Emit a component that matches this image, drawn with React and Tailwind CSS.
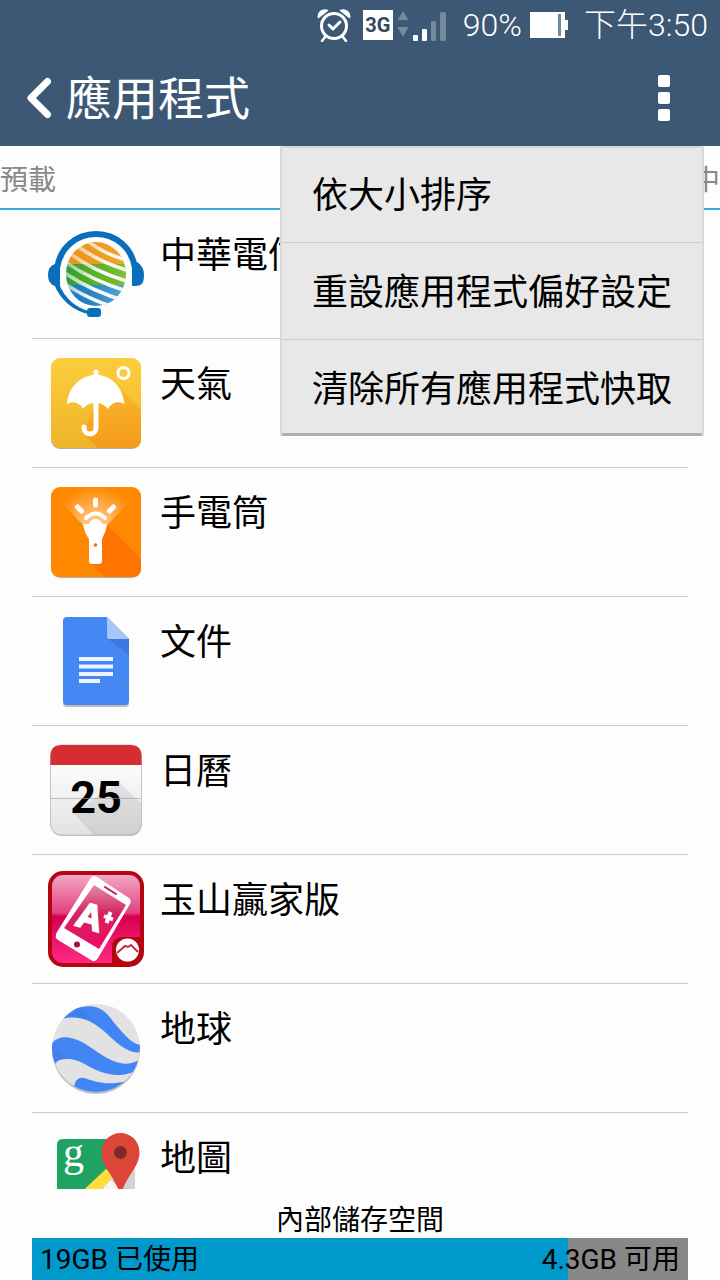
const AlarmIcon = () => (
  <svg viewBox="0 0 34 34" className="w-[34px] h-[34px]" fill="none" stroke="white" strokeLinecap="round">
    <circle cx="17" cy="18" r="12.5" strokeWidth="3" />
    <path d="M12 17l4 4 7-7" strokeWidth="3" strokeLinejoin="round" />
    <path d="M8 29l-3 4M26 29l3 4" strokeWidth="2.5" />
    <path d="M1.5 9.5C0.5 4.5 5.5 0.5 10.5 2.5Z" fill="white" strokeWidth="1.5" strokeLinejoin="round" />
    <path d="M32.5 9.5C33.5 4.5 28.5 0.5 23.5 2.5Z" fill="white" strokeWidth="1.5" strokeLinejoin="round" />
  </svg>
);

const SignalIcon = () => (
  <svg viewBox="0 0 50 34" className="w-[50px] h-[34px]">
    <g fill="#75899d">
      <path d="M6 3l5.5 9h-11zM6 29l5.5-10h-11z" />
      <rect x="34" y="13" width="5" height="20" rx="1.5" />
      <rect x="43" y="4" width="6" height="29" rx="1.5" />
    </g>
    <rect x="16" y="27" width="5" height="6" rx="1" fill="white" />
    <rect x="25" y="21" width="5" height="12" rx="1" fill="white" />
  </svg>
);

const BatteryIcon = () => (
  <svg viewBox="0 0 38 26" className="w-[38px] h-[26px]">
    <path d="M0 0h35v8h3v10h-3v8H0z" fill="white" />
    <rect x="28" y="2" width="3" height="22" fill="#75899d" />
  </svg>
);

const ServiceIcon = () => (
  <svg viewBox="0 0 96 96" className="w-24 h-24 shrink-0">
    <defs>
      <clipPath id="ball">
        <ellipse cx="48" cy="48" rx="30" ry="32" />
      </clipPath>
      <linearGradient id="orangeBand" x1="0" x2="1">
        <stop offset="0" stopColor="#e8921c" />
        <stop offset="1" stopColor="#f2a32e" />
      </linearGradient>
      <linearGradient id="greenBand" x1="0" x2="1">
        <stop offset="0" stopColor="#2f9e2f" />
        <stop offset="0.5" stopColor="#5cb02c" />
        <stop offset="1" stopColor="#7fc02f" />
      </linearGradient>
      <linearGradient id="blueBand" x1="0" x2="1">
        <stop offset="0.3" stopColor="#1f7fbf" />
        <stop offset="1" stopColor="#5ba5d3" />
      </linearGradient>
      <linearGradient id="stripe" gradientUnits="userSpaceOnUse" x1="18" x2="78" y1="30" y2="60">
        <stop offset="0" stopColor="white" stopOpacity="0.4" />
        <stop offset="0.6" stopColor="white" stopOpacity="0.95" />
      </linearGradient>
    </defs>
    <g clipPath="url(#ball)">
      <rect x="18" y="16" width="60" height="22" fill="url(#orangeBand)" />
      <rect x="18" y="38" width="60" height="21" fill="url(#greenBand)" />
      <rect x="18" y="59" width="60" height="21" fill="url(#blueBand)" />
      <g fill="none" stroke="url(#stripe)" strokeWidth="3.6">
        <path d="M38 14Q56 28 78 34" />
        <path d="M28 19Q50 36 82 45" />
        <path d="M20 26Q46 46 82 56" />
        <path d="M16 35Q44 55 82 66" />
        <path d="M14 45Q42 65 78 75" />
        <path d="M14 56Q40 74 72 83" />
      </g>
    </g>
    <path d="M9 42C12 22 28 8 48 8S84 22 87 42" fill="none" stroke="#0a6fba" strokeWidth="6" />
    <path d="M12 60H7Q0 58 0 49T7 38H12ZM84 36H89Q96 40 96 49T92 59Q91 60 84 60Z" fill="#0a6fba" />
    <path d="M6 58C12 74 26 85 40 88V85C28 81 17 73 11 58Z" fill="#0a6fba" />
    <rect x="39" y="82" width="14" height="9" rx="3" fill="#0a6fba" />
  </svg>
);

const WeatherIcon = () => (
  <svg viewBox="0 0 96 96" className="w-24 h-24 shrink-0">
    <defs>
      <linearGradient id="sun" x1="0" x2="0" y1="0" y2="1">
        <stop offset="0" stopColor="#fdce3c" />
        <stop offset="1" stopColor="#efb32b" />
      </linearGradient>
      <linearGradient id="sunShade" x1="0" x2="0" y1="0" y2="1">
        <stop offset="0" stopColor="#f9b529" />
        <stop offset="1" stopColor="#f49a1c" />
      </linearGradient>
    </defs>
    <rect x="3" y="4" width="90" height="90" rx="9" fill="#000" opacity="0.3" />
    <rect x="3" y="3" width="90" height="90" rx="9" fill="url(#sun)" />
    <path d="M73 35L93 55V84Q93 93 84 93H50L35 78L47 50Z" fill="url(#sunShade)" />
    <path
      d="M45.5 20V17a2.500 2.500 0 0 1 5 0V20C64 21 75 33 76.500 49Q71 46 66 48Q62 50 60 54Q56 49 50.500 48V73A8.500 8.500 0 0 1 33.500 73V72a2.500 2.500 0 0 1 5 0V73A3.500 3.500 0 0 0 45.500 73V48Q38 49 35 54Q33 50 29 48Q24 46 19 49C20 33 32 21 45.500 20Z"
      fill="white"
    />
    <circle cx="75.5" cy="18" r="5.5" fill="none" stroke="white" strokeWidth="3" />
  </svg>
);

const TorchIcon = () => (
  <svg viewBox="0 0 96 96" className="w-24 h-24 shrink-0">
    <defs>
      <radialGradient id="beam" gradientUnits="userSpaceOnUse" cx="47.5" cy="44" r="42">
        <stop offset="0.1" stopColor="white" stopOpacity="0.6" />
        <stop offset="1" stopColor="white" stopOpacity="0" />
      </radialGradient>
    </defs>
    <rect x="3" y="4" width="90" height="90" rx="9" fill="#000" opacity="0.3" />
    <rect x="3" y="3" width="90" height="90" rx="9" fill="#ff8800" />
    <path d="M60 42L93 75V84Q93 93 84 93H57L42 78Z" fill="#ff7300" />
    <path d="M4 9Q47 -2 91 9L59 41H35Z" fill="url(#beam)" />
    <path
      d="M35 40H41Q43 35 47.5 35T54 40H59Q58 48 54 55V77Q54 80 51 80H44Q41 80 41 77V55Q36 48 35 40Z"
      fill="white"
    />
    <path d="M38 34Q47.5 25 57 34" fill="none" stroke="white" strokeWidth="4" strokeLinecap="round" />
    <path
      d="M47.5 16V21M29.5 23L33.5 27M65.5 23L61.5 27"
      stroke="white"
      strokeWidth="5"
      strokeLinecap="round"
    />
    <circle cx="47.5" cy="61" r="1.8" fill="#f26a1b" />
  </svg>
);

const DocsIcon = () => (
  <svg viewBox="0 0 96 96" className="w-24 h-24 shrink-0">
    <path d="M19 5H59L81 27V90Q81 94 77 94H19Q15 94 15 90V9Q15 5 19 5Z" fill="#000" opacity="0.25" />
    <path d="M19 4H59L81 26V88Q81 92 77 92H19Q15 92 15 88V8Q15 4 19 4Z" fill="#4587f3" />
    <path d="M60 26H81V42Z" fill="#3b78e0" />
    <path d="M59 4L81 26H61Q59 26 59 24Z" fill="#a6c6fa" />
    <path d="M31 44H65V48H31ZM31 51.5H65V55.5H31ZM31 59H65V63H31ZM31 66H52V70H31Z" fill="#eef4ff" />
  </svg>
);

const CalendarIcon = () => (
  <svg viewBox="0 0 96 96" className="w-24 h-24 shrink-0">
    <defs>
      <linearGradient id="paper" x1="0" x2="0" y1="0" y2="1">
        <stop offset="0.2" stopColor="#fdfdfd" />
        <stop offset="1" stopColor="#e2e2e2" />
      </linearGradient>
    </defs>
    <rect x="2.5" y="4" width="91" height="90" rx="11" fill="#000" opacity="0.25" />
    <rect x="2.5" y="3" width="91" height="90" rx="11" fill="url(#paper)" stroke="#c4c4c4" />
    <path d="M2.5 23V14Q2.5 3 13.5 3H82.5Q93.5 3 93.5 14V23Z" fill="#d62d30" />
    <path d="M71 40L93 61V83Q93 93 83 93H46L25 71Z" fill="#000" opacity="0.08" />
    <text x="48" y="71" textAnchor="middle" fontSize="45" fontWeight="700" fontFamily="Roboto, sans-serif">
      25
    </text>
    <path d="M3 56.5H93" stroke="#999" strokeOpacity="0.6" />
  </svg>
);

const BankIcon = () => (
  <svg viewBox="0 0 96 96" className="w-24 h-24 shrink-0">
    <defs>
      <linearGradient id="pink" x1="0" x2="0" y1="0" y2="1">
        <stop offset="0" stopColor="#f3a8c4" />
        <stop offset="0.43" stopColor="#e2417f" />
        <stop offset="0.47" stopColor="#d6004f" />
        <stop offset="1" stopColor="#ff2a86" />
      </linearGradient>
      <linearGradient id="screen" x1="0" x2="0" y1="0" y2="1">
        <stop offset="0" stopColor="#e58aab" />
        <stop offset="0.45" stopColor="#d3225f" />
        <stop offset="1" stopColor="#f00a66" />
      </linearGradient>
    </defs>
    <rect width="96" height="96" rx="15" fill="#b5060f" />
    <rect x="4" y="4" width="88" height="88" rx="11" fill="url(#pink)" />
    <path d="M49 6L81 27Q84 29 82 33L50 87Q47 92 43 89L10 69Q6 66 9 61L42 8Q45 3 49 6Z" fill="white" />
    <path d="M46 14L78 34L51 78L16 57Z" fill="url(#screen)" />
    <path d="M57 16L68 23" stroke="#c2185b" strokeWidth="2" strokeLinecap="round" />
    <circle cx="29" cy="73.5" r="3" fill="#a80d3e" />
    <text
      x="26"
      y="54"
      fontSize="36"
      fontWeight="700"
      fill="white"
      stroke="white"
      strokeWidth="2"
      fontFamily="Liberation Sans, Arial, sans-serif"
      transform="rotate(16 26 54)"
    >
      A
    </text>
    <path d="M62.5 41L58.5 52M56 45L65 48.5" stroke="white" strokeWidth="4" />
    <path d="M64 94V76Q64 66 74 66H94V84Q92 94 82 94Z" fill="#b5060f" />
    <circle cx="79.5" cy="79" r="11.5" fill="white" />
    <path d="M69 82L77 75L80 76L83 74L90 81" fill="none" stroke="#c0303a" strokeWidth="2" />
  </svg>
);

const EarthIcon = () => (
  <svg viewBox="0 0 96 96" className="w-24 h-24 shrink-0">
    <defs>
      <clipPath id="globe">
        <circle cx="48" cy="48" r="44" />
      </clipPath>
    </defs>
    <circle cx="48" cy="50" r="44" fill="#000" opacity="0.25" />
    <circle cx="48" cy="48" r="44" fill="#e2e2e2" />
    <g clipPath="url(#globe)">
      <g fill="#4285f4">
        <path d="M14 19L26 9C54 0 60 16 68 25S84 45 94 45V52C80 55 68 42 57 32S32 14 14 19Z" />
        <path d="M0 50C5 38 14 35 25 38.5C42 43 52 58 72 63Q82 66 95 58L89 70C78 77 64 76 52 71.5C38 66 30 58 18 59Q10 59 7 64Z" />
        <path d="M26 90C26 81 30 77 36 78C48 82 60 86 79 81L72 96H30Z" />
      </g>
      <path d="M34 7L17 17.5C32 15 44 20 52 27ZM6 42L20 59Q10 59 7 62L2 50Z" fill="#3b76dd" opacity="0.35" />
    </g>
  </svg>
);

const MapsIcon = () => (
  <svg viewBox="0 0 96 96" className="w-24 h-24 shrink-0 overflow-visible">
    <rect x="9" y="10" width="78" height="78" rx="6" fill="#d2d2d2" />
    <path d="M15 10H70L72 28L12 88Q9 86 9 82V16Q9 10 15 10Z" fill="#1ea362" />
    <path d="M58 40L66 47L25 88H12L9 86Z" fill="#ffdd3c" />
    <path d="M55 59L63 51L87 75V84Z" fill="#f5f5f5" />
    <text x="15" y="37" fontSize="42" fill="white" fontFamily="Liberation Serif, serif">
      g
    </text>
    <path
      d="M72.5 4A19 19 0 0 1 91.5 23C91.5 39 78 46 72.5 67C67 46 53.5 39 53.5 23A19 19 0 0 1 72.5 4Z"
      fill="#dc4639"
    />
    <circle cx="72.5" cy="23.5" r="6.5" fill="#7b2b25" />
  </svg>
);

const apps = [
  { name: "中華電信", Icon: ServiceIcon },
  { name: "天氣", Icon: WeatherIcon },
  { name: "手電筒", Icon: TorchIcon },
  { name: "文件", Icon: DocsIcon },
  { name: "日曆", Icon: CalendarIcon },
  { name: "玉山贏家版", Icon: BankIcon },
  { name: "地球", Icon: EarthIcon },
  { name: "地圖", Icon: MapsIcon },
];

const menuItems = ["依大小排序", "重設應用程式偏好設定", "清除所有應用程式快取"];

const StatusBar = () => (
  <div className="flex h-[50px] items-center justify-end pr-3 text-[32px] leading-[50px] font-light text-white">
    <AlarmIcon />
    <span className="ml-3 w-[30px] h-[30px] bg-white text-center text-xl leading-[30px] font-bold text-[#33485e]">
      3G
    </span>
    <span className="ml-1">
      <SignalIcon />
    </span>
    <span className="ml-4">90%</span>
    <span className="ml-2">
      <BatteryIcon />
    </span>
    <time className="ml-4">下午3:50</time>
  </div>
);

const Header = () => (
  <div className="flex h-24 items-center justify-between pl-6 pr-10 text-white">
    <button className="flex items-center gap-3">
      <svg viewBox="0 0 30 44" className="w-[30px] h-[44px]" fill="none" stroke="white" strokeWidth="7">
        <path d="M23.5 5.5L7 22L23.5 38.5" strokeLinecap="round" strokeLinejoin="round" />
      </svg>
      <h1 className="pt-[2px] text-[46px] leading-[60px]">應用程式</h1>
    </button>
    <button aria-label="更多選項" className="flex w-8 flex-col items-center gap-[5px]">
      <span className="w-3 h-3 rounded-xs bg-white" />
      <span className="w-3 h-3 rounded-xs bg-white" />
      <span className="w-3 h-3 rounded-xs bg-white" />
    </button>
  </div>
);

const OptionsMenu = () => (
  <ul className="absolute top-0 right-4 z-10 rounded-xs border-x-2 border-[#d8d8d8] bg-[#e8e8e8] shadow-[inset_0_2px_0_#d8d8d8,inset_0_-3px_0_#b0b0b0] divide-y divide-[#cccccc]">
    {menuItems.map((item) => (
      <li key={item}>
        <button className="block w-full px-[30px] pt-6 pb-5 text-left text-4xl leading-[52px]">{item}</button>
      </li>
    ))}
  </ul>
);

export default function App() {
  return (
    <div
      lang="zh-Hant"
      className="flex h-screen flex-col overflow-hidden bg-[#fdfdfd] text-black font-[Roboto,'Noto_Sans_CJK_TC',sans-serif]"
    >
      <header className="bg-[#3c5874]">
        <StatusBar />
        <Header />
      </header>

      <main className="relative flex min-h-0 flex-1 flex-col">
        <OptionsMenu />
        <nav className="flex h-16 shrink-0 justify-between border-b-2 border-[#38a8d4] pt-2 text-[28px] text-[#888888]">
          <button>預載</button>
          <button>執行中</button>
        </nav>

        <ul className="min-h-0 flex-1 overflow-hidden px-8">
          {apps.map(({ name, Icon }) => (
            <li key={name} className="border-b border-[#cccccc]">
              <button className="flex w-full items-start gap-4 p-4 text-left">
                <Icon />
                <span className="text-4xl leading-[60px]">{name}</span>
              </button>
            </li>
          ))}
        </ul>
      </main>

      <footer className="px-8 pt-3 text-[28px]">
        <p className="pt-[2px] text-center leading-[35px]">內部儲存空間</p>
        <div className="flex h-[42px] items-center justify-between bg-[linear-gradient(to_right,#0099cc_81.7%,#888888_81.7%)] px-2 pt-[2px]">
          <span>19GB 已使用</span>
          <span>4.3GB 可用</span>
        </div>
      </footer>
    </div>
  );
}
